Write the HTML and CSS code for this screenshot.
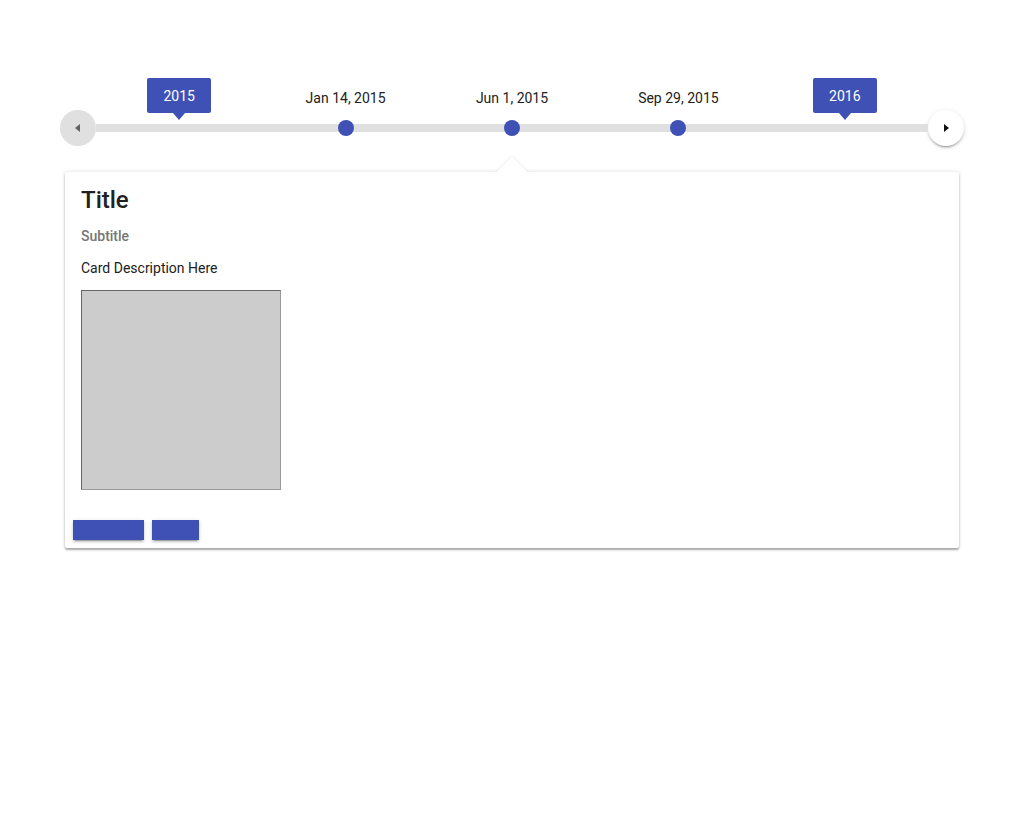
FILE: index.html
```html
<!DOCTYPE html>
<html lang="en">
<head>
<meta charset="utf-8">
<title>Timeline</title>
<link rel="stylesheet" href="styles.css">
</head>
<body>
<div class="page">
  <div class="timeline">
    <button class="nav nav-prev" aria-label="Previous"><span class="tri tri-left"></span></button>
    <div class="track">
      <div class="bar"></div>
      <div class="point" style="left:10%"><div class="tip">2015</div></div>
      <div class="point" style="left:30%"><div class="label">Jan 14, 2015</div><span class="dot"></span></div>
      <div class="point" style="left:50%"><div class="label">Jun 1, 2015</div><span class="dot"></span></div>
      <div class="point" style="left:70%"><div class="label">Sep 29, 2015</div><span class="dot"></span></div>
      <div class="point" style="left:90%"><div class="tip">2016</div></div>
    </div>
    <button class="nav nav-next" aria-label="Next"><span class="tri tri-right"></span></button>
  </div>
  <div class="card">
    <div class="caret"><span class="caret-sq"></span></div>
    <div class="content">
      <h2 class="title">Title</h2>
      <div class="subtitle">Subtitle</div>
      <p class="desc">Card Description Here</p>
      <div class="media"></div>
    </div>
    <div class="actions">
      <button class="btn btn-wide"></button>
      <button class="btn btn-narrow"></button>
    </div>
  </div>
</div>
</body>
</html>
```
FILE: styles.css
```css
* { box-sizing: border-box; }
html, body { margin: 0; padding: 0; background: #fff; }
body { font-family: Roboto, "Noto Sans", "Liberation Sans", sans-serif; color: #212121; }
.page { padding: 110px 60px 40px; }

.timeline { display: flex; align-items: center; height: 36px; }
.nav {
  width: 36px; height: 36px; border-radius: 50%; border: 0; padding: 0;
  display: flex; align-items: center; justify-content: center; flex: none;
}
.nav-prev { background: #e0e0e0; }
.nav-next { background: #fff; box-shadow: 0 2px 2px rgba(0,0,0,.14), 0 3px 1px -2px rgba(0,0,0,.2), 0 1px 5px rgba(0,0,0,.12); }
.tri { width: 0; height: 0; border-top: 4px solid transparent; border-bottom: 4px solid transparent; }
.tri-left { border-right: 5px solid #616161; margin-right: 1px; }
.tri-right { border-left: 5px solid #111; margin-left: 1px; }

.track { position: relative; flex: 1; height: 36px; display: flex; align-items: center; }
.bar { flex: 1; height: 8px; background: #e0e0e0; }
.point { position: absolute; top: 0; height: 36px; width: 0; display: flex; justify-content: center; }
.dot {
  position: absolute; top: 10px; left: -8px; width: 16px; height: 16px; border-radius: 50%;
  background: #3f51b5;
}
.label {
  position: absolute; bottom: 38px; transform: translateX(-50%); left: 0;
  white-space: nowrap; font-size: 14px; line-height: 20px; color: #212121;
}
.tip {
  position: absolute; bottom: 33px; left: -32px; width: 64px; height: 35px;
  background: #3f51b5; color: #fff; border-radius: 2px;
  font-size: 14px; line-height: 36px; text-align: center;
}
.tip::after {
  content: ""; position: absolute; left: 26px; top: 35px; width: 0; height: 0;
  border-left: 6px solid transparent; border-right: 6px solid transparent; border-top: 7px solid #3f51b5;
}

.card {
  position: relative; margin: 26px 5px 0; background: #fff; border-radius: 2px;
  box-shadow: 0 2px 2px rgba(0,0,0,.3), 0 0 4px rgba(0,0,0,.14);
}
.caret { position: absolute; top: -16px; left: 50%; margin-left: -20px; width: 40px; height: 16px; overflow: hidden; }
.caret-sq {
  position: absolute; left: 9px; top: 5px; width: 22px; height: 22px; background: #fff;
  transform: rotate(45deg); box-shadow: 0 0 3px rgba(0,0,0,.12);
}
.content { padding: 16px 16px 0; }
.title { margin: 0; font-size: 24px; line-height: 24px; font-weight: 500; color: #212121; }
.subtitle { margin-top: 14px; font-size: 14px; line-height: 20px; font-weight: 500; color: #757575; }
.desc { margin: 12px 0 0; font-size: 14px; line-height: 20px; color: #212121; }
.media { margin-top: 12px; width: 200px; height: 200px; background: #ccc; border: 1px solid #666; border-right-color: #999; border-bottom-color: #999; }
.actions { display: flex; gap: 8px; padding: 30px 8px 8px; }
.btn {
  height: 20px; border: 0; padding: 0; background: #3f51b5; border-radius: 0;
  box-shadow: 0 2px 2px rgba(0,0,0,.14), 0 3px 1px -2px rgba(0,0,0,.2), 0 1px 5px rgba(0,0,0,.12);
}
.btn-wide { width: 71px; }
.btn-narrow { width: 47px; }
```
